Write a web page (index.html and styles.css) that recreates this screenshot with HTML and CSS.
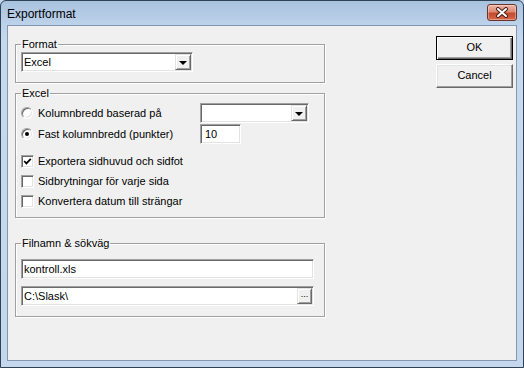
FILE: index.html
```html
<!DOCTYPE html>
<html lang="sv">
<head>
    <meta charset="UTF-8">
    <title>Exportformat</title>
    <link rel="stylesheet" href="styles.css">
</head>
<body>
    <div class="window">
        <div class="titlebar">
            <span class="title">Exportformat</span>
            <div class="close">
                <svg width="14" height="11" viewBox="0 0 14 11">
                    <path d="M3 2 L11 9 M11 2 L3 9" stroke="#4a1f18" stroke-width="4" stroke-linecap="round"/>
                    <path d="M3 2 L11 9 M11 2 L3 9" stroke="#fff" stroke-width="2" stroke-linecap="round"/>
                </svg>
            </div>
        </div>

        <div class="client">
            <div class="main">
                <fieldset class="group group-format">
                    <legend>Format</legend>
                    <div class="field combo combo-format">
                        <span class="field-text">Excel</span>
                        <span class="raised drop-btn"><span class="arrow"></span></span>
                    </div>
                </fieldset>

                <fieldset class="group group-excel">
                    <legend>Excel</legend>
                    <div class="row">
                        <div class="option"><span class="radio"></span>Kolumnbredd baserad på</div>
                        <div class="field combo combo-small">
                            <span class="field-text"></span>
                            <span class="raised drop-btn"><span class="arrow"></span></span>
                        </div>
                    </div>
                    <div class="row row-second">
                        <div class="option"><span class="radio checked"></span>Fast kolumnbredd (punkter)</div>
                        <div class="field textbox-small"><span class="field-text">10</span></div>
                    </div>
                    <div class="checks">
                        <div class="row"><span class="check">
                            <svg width="9" height="9" viewBox="0 0 9 9"><polyline points="1.2,4 3.4,6.4 7.8,1.8" fill="none" stroke="#000" stroke-width="1.7"/></svg>
                        </span>Exportera sidhuvud och sidfot</div>
                        <div class="row"><span class="check"></span>Sidbrytningar för varje sida</div>
                        <div class="row"><span class="check"></span>Konvertera datum till strängar</div>
                    </div>
                </fieldset>

                <fieldset class="group group-file">
                    <legend>Filnamn &amp; sökväg</legend>
                    <div class="field textbox"><span class="field-text">kontroll.xls</span></div>
                    <div class="field textbox path">
                        <span class="field-text">C:\Slask\</span>
                        <span class="raised browse-btn">...</span>
                    </div>
                </fieldset>
            </div>

            <div class="side">
                <div class="btn btn-default">OK</div>
                <div class="btn">Cancel</div>
            </div>
        </div>
    </div>
</body>
</html>
```

FILE: styles.css
```css
* {
    box-sizing: border-box;
}

body {
    margin: 0;
    font-family: "Liberation Sans", Arial, sans-serif;
    font-size: 11px;
    color: #000;
    background: #c4d7ed;
}

/* Window frame */
.window {
    width: 524px;
    height: 368px;
    display: flex;
    flex-direction: column;
    border: 1px solid #2f4357;
    border-radius: 6px 6px 0 0;
    background: linear-gradient(#a8c2df, #bcd1ea 22px, #c6d9ee 40px, #c4d7ed);
    padding: 0 6px 6px;
}

.titlebar {
    height: 24px;
    display: flex;
    justify-content: space-between;
}

.title {
    font-size: 12px;
    line-height: 26px;
}

.close {
    width: 30px;
    height: 17px;
    margin-top: 3px;
    border: 1px solid #6b3328;
    border-radius: 3px;
    background: linear-gradient(#ecb4a6, #dc8a74 45%, #c54a2c 55%, #d3694c);
    box-shadow: inset 0 0 0 1px rgba(255, 255, 255, 0.35);
    display: flex;
    align-items: center;
    justify-content: center;
}

.client {
    flex: 1;
    display: flex;
    border: 1px solid #8298b2;
    background: #f0f0f0;
}

.main {
    width: 318px;
    padding: 12px 0 0 7px;
}

/* Group boxes */
.group {
    width: 310px;
    margin: 0;
    min-width: 0;
    border: 1px solid #a0a0a0;
    box-shadow: 1px 1px 0 #fff, inset 1px 1px 0 #fff;
    padding: 1px 10px 10px 5px;
}

.group legend {
    padding: 0 1px;
    line-height: 13px;
}

.group-excel {
    margin-top: 4px;
    padding-top: 3px;
    padding-bottom: 6px;
}

.group-file {
    margin-top: 19px;
    padding-top: 9px;
}

/* Sunken fields */
.field {
    display: flex;
    align-items: center;
    height: 20px;
    background: #fff;
    border: 1px solid;
    border-color: #a0a0a0 #fff #fff #a0a0a0;
    box-shadow: inset 1px 1px 0 #696969, inset -1px -1px 0 #e3e3e3;
    padding: 1px;
}

.field-text {
    flex: 1;
    padding-left: 1px;
    white-space: nowrap;
}

.combo-format {
    width: 172px;
}

.combo-small {
    width: 109px;
}

.textbox-small {
    width: 41px;
}

.textbox-small .field-text {
    padding-left: 3px;
}

.textbox {
    width: 293px;
}

.path {
    margin-top: 7px;
}

/* Raised buttons */
.raised {
    background: #f0f0f0;
    border: 1px solid;
    border-color: #e3e3e3 #696969 #696969 #e3e3e3;
    box-shadow: inset 1px 1px 0 #fff, inset -1px -1px 0 #a0a0a0;
}

.drop-btn {
    width: 16px;
    height: 16px;
    display: flex;
    align-items: center;
    justify-content: center;
}

.arrow {
    width: 0;
    height: 0;
    border-left: 4px solid transparent;
    border-right: 4px solid transparent;
    border-top: 4px solid #000;
    margin-top: 1px;
}

.browse-btn {
    width: 15px;
    height: 16px;
    font-size: 9px;
    line-height: 11px;
    text-align: center;
}

/* Options */
.row {
    display: flex;
    align-items: center;
    height: 20px;
    white-space: nowrap;
}

.row-second {
    margin-top: 1px;
}

.checks {
    margin-top: 7px;
}

.option {
    width: 179px;
    display: flex;
    align-items: center;
}

.radio {
    width: 12px;
    height: 12px;
    margin-right: 5px;
    border-radius: 50%;
    background: #fff;
    border: 1px solid;
    border-color: #a0a0a0 #fff #fff #a0a0a0;
    box-shadow: inset 1px 1px 0 #696969, inset -1px -1px 0 #e3e3e3;
    display: flex;
    align-items: center;
    justify-content: center;
}

.radio.checked::after {
    content: "";
    width: 4px;
    height: 4px;
    border-radius: 50%;
    background: #000;
}

.check {
    width: 13px;
    height: 13px;
    margin-right: 4px;
    background: #fff;
    border: 1px solid;
    border-color: #a0a0a0 #fff #fff #a0a0a0;
    box-shadow: inset 1px 1px 0 #696969, inset -1px -1px 0 #e3e3e3;
    display: flex;
    align-items: center;
    justify-content: center;
}

/* Dialog buttons */
.side {
    width: 77px;
    margin-left: auto;
    margin-right: 3px;
    padding-top: 10px;
    display: flex;
    flex-direction: column;
    gap: 4px;
}

.btn {
    height: 24px;
    line-height: 20px;
    text-align: center;
    background: #f0f0f0;
    border: 1px solid;
    border-color: #fff #696969 #696969 #fff;
    box-shadow: inset -1px -1px 0 #a0a0a0, inset 1px 1px 0 #e3e3e3;
}

.btn-default {
    border-color: #000;
    box-shadow: inset 1px 1px 0 #fff, inset -1px -1px 0 #696969, inset -2px -2px 0 #a0a0a0;
}
```
